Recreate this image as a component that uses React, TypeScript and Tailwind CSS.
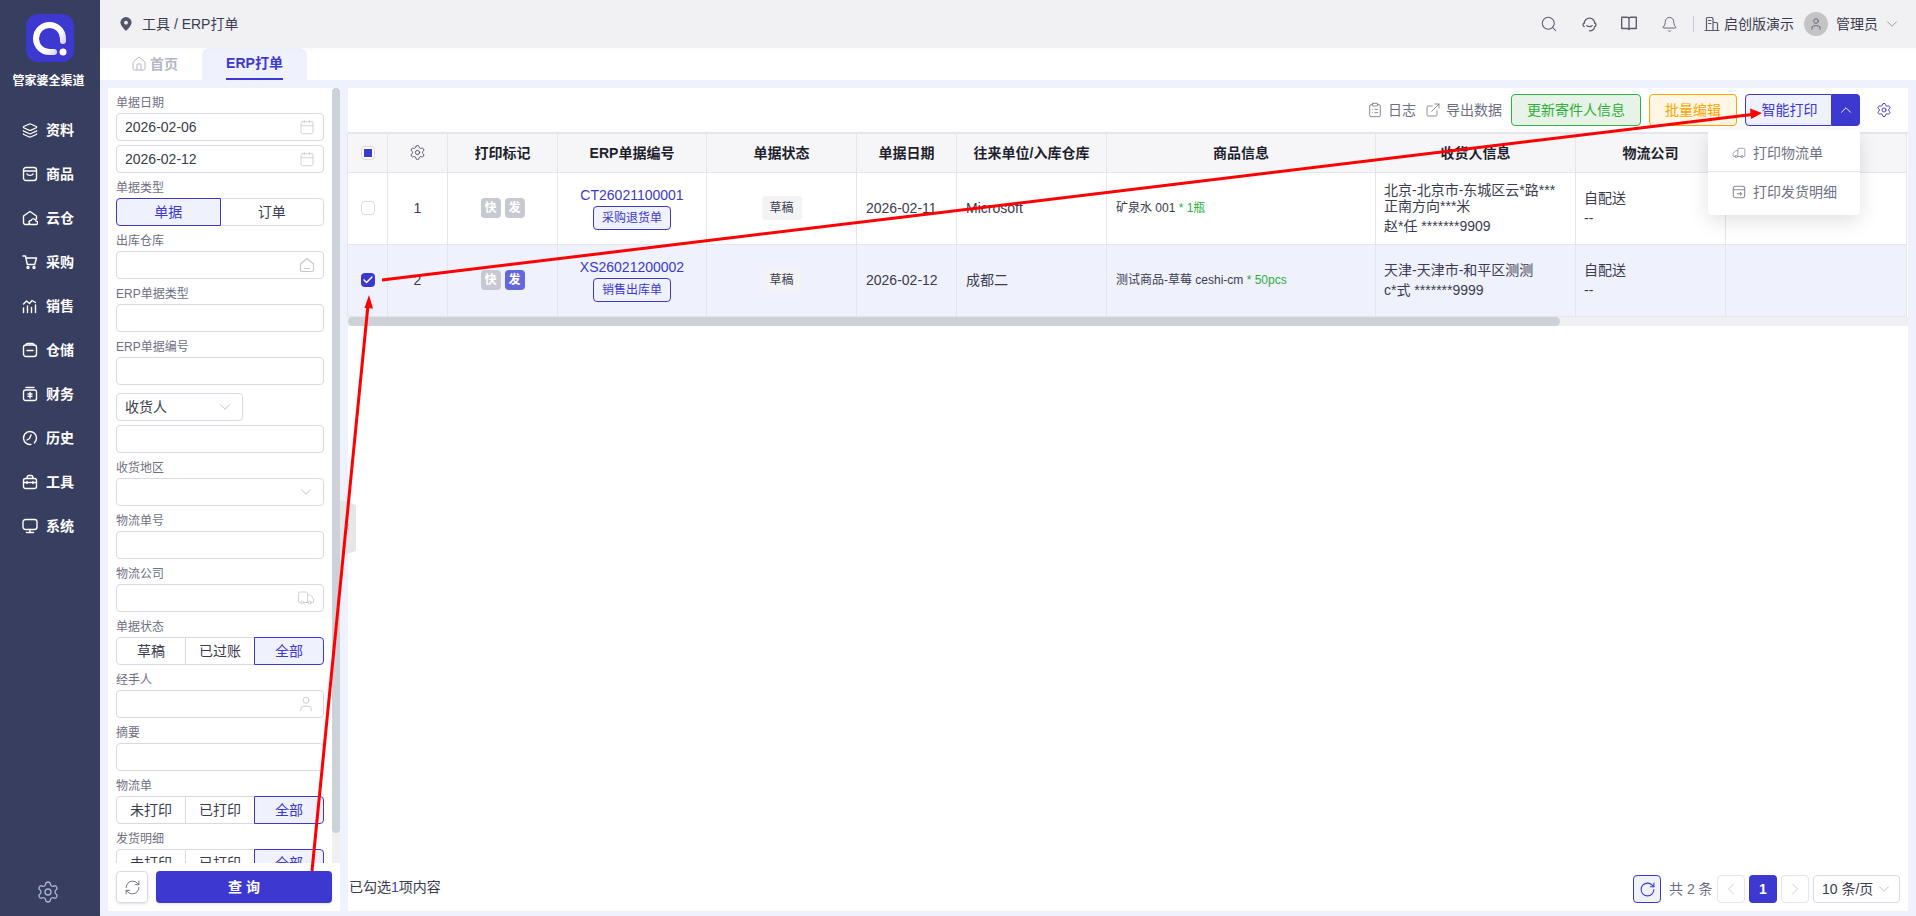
import React from 'react';
import { Layers, Search, Bell, ChevronDown, ChevronUp, ChevronLeft, ChevronRight, Calendar, Settings, User, Truck, ClipboardList, ExternalLink, RefreshCw, RotateCw, Check, House } from 'lucide-react';

const Ic = ({ children, className = 'w-4 h-4', sw = 1.2 }: { children: React.ReactNode; className?: string; sw?: number }) => (
  <svg viewBox="0 0 16 16" fill="none" stroke="currentColor" strokeWidth={sw} strokeLinecap="round" strokeLinejoin="round" className={className}>
    {children}
  </svg>
);

const menu = [
  { label: '资料', icon: <Layers className="w-[17px] h-[17px]" strokeWidth={1.8} /> },
  { label: '商品', icon: <Ic sw={1.4}><rect x="1.5" y="1.5" width="13" height="13" rx="2.5" /><path d="M1.5 5h13M5 8c.6 1.8 5.4 1.8 6 0" /></Ic> },
  { label: '云仓', icon: <Ic sw={1.4}><path d="M7 14.500H3.500a2 2 0 0 1-2-2V6L8 1.500 14.500 6v3" /><path d="M9 14.500a2 2 0 0 1 0-4 2.600 2.600 0 0 1 5 .6 1.700 1.700 0 0 1 0 3.400z" /></Ic> },
  { label: '采购', icon: <Ic sw={1.4}><path d="M1 2h2.500l1.800 8.500h7.400L14.500 4H4" /><circle cx="6" cy="13.500" r="1" /><circle cx="12" cy="13.500" r="1" /></Ic> },
  { label: '销售', icon: <Ic sw={1.4}><path d="M1.500 14.500V10M5.500 14.500V8M9.500 14.500V9.500M13.500 14.500V7M1.500 6l3-3 3 2.500 2.500-3 3.500 2" /></Ic> },
  { label: '仓储', icon: <Ic sw={1.4}><rect x="1.5" y="3" width="13" height="11.500" rx="2.500" /><path d="M4 3c0-1 .6-1.500 1.500-1.500h5c.9 0 1.500.5 1.500 1.500M5 8.500h6" /></Ic> },
  { label: '财务', icon: <Ic sw={1.4}><rect x="1.5" y="4" width="13" height="10.500" rx="2" /><path d="M4 1.500h8M8 6.500v5.500M6 8h4M6 10.200h4" /></Ic> },
  { label: '历史', icon: <Ic sw={1.4}><path d="M9 14.400A6.500 6.500 0 1 1 14.500 8a6.500 6.500 0 0 1-2.200 4.900" /><path d="M9 5 7.500 8.500 5 10" /></Ic> },
  { label: '工具', icon: <Ic sw={1.4}><rect x="1.5" y="4.500" width="13" height="10" rx="2" /><path d="M5 4.500c0-2 .8-3 1.800-3h2.400c1 0 1.800 1 1.800 3M1.500 8.500h13M5 7.500v2M11 7.500v2" /></Ic> },
  { label: '系统', icon: <Ic sw={1.4}><rect x="1" y="1.500" width="14" height="10" rx="2.500" /><path d="M4.500 14.500h7M8 11.500v3" /></Ic> },
];

const Label = ({ children }: { children: React.ReactNode }) => (
  <div className="h-[25px] pt-[5px] text-xs leading-5 text-[#6f6f83]">{children}</div>
);

const Box = ({ children, className = '' }: { children?: React.ReactNode; className?: string }) => (
  <div className={`h-7 w-full rounded border border-[#d9d9e3] bg-white flex items-center justify-between pl-2 pr-2 text-sm text-[#3c3c50] ${className}`}>
    {children}
  </div>
);

const Seg = ({ items, active }: { items: string[]; active: number }) => (
  <div className="flex h-7 w-full">
    {items.map((t, i) => (
      <div
        key={t}
        className={`flex-1 flex items-center justify-center text-sm border ${i > 0 ? '-ml-px' : ''} ${i === 0 ? 'rounded-l' : ''} ${i === items.length - 1 ? 'rounded-r' : ''} ${i === active ? 'relative z-10 border-[#3d38d0] bg-[#eff1fd] text-[#3d38d0]' : 'border-[#d9d9e3] bg-white text-[#3c3c50]'}`}
      >
        {t}
      </div>
    ))}
  </div>
);

const cal = <Calendar className="w-4 h-4 text-[#c8c8d2]" strokeWidth={1.2} />;
const chev = <ChevronDown className="w-[18px] h-[18px] shrink-0 text-[#b5b5c3]" strokeWidth={1.1} />;

function Filters() {
  return (
    <div className="w-[232px] bg-white flex flex-col shrink-0">
      <div className="h-[775px] flex overflow-hidden">
        <div className="flex-1 pl-2 pr-2 min-w-0">
          <Label>单据日期</Label>
          <Box>2026-02-06{cal}</Box>
          <Box className="mt-1">2026-02-12{cal}</Box>
          <Label>单据类型</Label>
          <Seg items={['单据', '订单']} active={0} />
          <Label>出库仓库</Label>
          <Box><span /><Ic className="w-4 h-4 text-[#c8c8d2]"><path d="M1.500 7 8 1.500 14.500 7v6a1.500 1.500 0 0 1-1.500 1.500H3A1.500 1.500 0 0 1 1.500 13zM5.500 11.500h5" /></Ic></Box>
          <Label>ERP单据类型</Label>
          <Box />
          <Label>ERP单据编号</Label>
          <Box />
          <div className="h-2" />
          <Box className="!w-[127px]"><span>收货人</span>{chev}</Box>
          <Box className="mt-1" />
          <Label>收货地区</Label>
          <Box><span />{chev}</Box>
          <Label>物流单号</Label>
          <Box />
          <Label>物流公司</Label>
          <Box><span /><Truck className="w-[18px] h-[18px] text-[#c8c8d2]" strokeWidth={1.1} /></Box>
          <Label>单据状态</Label>
          <Seg items={['草稿', '已过账', '全部']} active={2} />
          <Label>经手人</Label>
          <Box><span /><User className="w-[18px] h-[18px] text-[#c8c8d2]" strokeWidth={1.2} /></Box>
          <Label>摘要</Label>
          <Box />
          <Label>物流单</Label>
          <Seg items={['未打印', '已打印', '全部']} active={2} />
          <Label>发货明细</Label>
          <Seg items={['未打印', '已打印', '全部']} active={2} />
        </div>
        <div className="w-2 bg-[#f0f0f3] rounded-t shrink-0">
          <div className="h-[745px] bg-[#cdd2d9] rounded" />
        </div>
      </div>
      <div className="flex gap-2 px-2 pt-2 pb-2">
        <div className="w-8 h-8 rounded border border-[#d9d9e3] flex items-center justify-center text-[#5c5c70] shadow-sm">
          <RefreshCw className="w-[17px] h-[17px]" strokeWidth={1.2} />
        </div>
        <div className="flex-1 h-8 rounded bg-[#3d38d0] text-white text-sm font-bold flex items-center justify-center gap-1 shadow-sm">
          <span>查</span><span>询</span>
        </div>
      </div>
    </div>
  );
}

const Mark = ({ t, on }: { t: string; on?: boolean }) => (
  <span className={`w-5 h-5 rounded-sm text-white text-xs font-bold flex items-center justify-center ${on ? 'bg-[#6366dd]' : 'bg-[#c8c8d2]'}`}>{t}</span>
);

const Td = ({ children, className = '' }: { children?: React.ReactNode; className?: string }) => (
  <td className={`border-r border-b border-[#e5e5ec] align-middle p-0 ${className}`}>{children}</td>
);

const headers = ['打印标记', 'ERP单据编号', '单据状态', '单据日期', '往来单位/入库仓库', '商品信息', '收货人信息', '物流公司', ''];
const widths = ['w-[40px]', 'w-[60px]', 'w-[110px]', 'w-[149px]', 'w-[150px]', 'w-[100px]', 'w-[150px]', 'w-[269px]', 'w-[200px]', 'w-[150px]', 'w-[181px]'];

const rows = [
  { n: 1, checked: false, no: 'CT26021100001', kind: '采购退货单', date: '2026-02-11', co: 'Microsoft', goods: '矿泉水 001', qty: ' * 1瓶', addr: ['北京-北京市-东城区云*路***', '正南方向***米'], who: '赵*任 *******9909', on: false },
  { n: 2, checked: true, no: 'XS26021200002', kind: '销售出库单', date: '2026-02-12', co: '成都二', goods: '测试商品-草莓 ceshi-cm', qty: ' * 50pcs', addr: ['天津-天津市-和平区测测'], who: 'c*式 *******9999', on: true },
];

function OrderTable() {
  return (
    <div className="border-t-2 border-[#e5e5ec]">
      <table className="-ml-px table-fixed border-collapse w-[1559px] text-sm text-[#3c3c50]">
        <colgroup>
          {widths.map((w, i) => <col key={i} className={w} />)}
        </colgroup>
        <thead>
          <tr className="h-[38px] bg-[#f6f6f9]">
            <Td className="border-l">
              <div className="w-[14px] h-[14px] mx-auto rounded-sm border border-[#d9d9e3] bg-white flex items-center justify-center">
                <div className="w-2 h-2 bg-[#3d38d0]" />
              </div>
            </Td>
            <Td><Settings className="w-[17px] h-[17px] mx-auto text-[#3c3c50]" strokeWidth={1.2} /></Td>
            {headers.map((h, i) => <Td key={i} className="text-center font-bold text-[#1f1f2e]">{h}</Td>)}
          </tr>
        </thead>
        <tbody>
          {rows.map((r) => (
            <tr key={r.n} className={`h-[72px] ${r.checked ? 'bg-[#eff1fd]' : 'bg-white'}`}>
              <Td className="border-l">
                {r.checked ? (
                  <div className="w-[14px] h-[14px] mx-auto rounded-sm bg-[#3d38d0] flex items-center justify-center">
                    <Check className="w-3 h-3 text-white" strokeWidth={3} />
                  </div>
                ) : (
                  <div className="w-[14px] h-[14px] mx-auto rounded-sm border border-[#d9d9e3] bg-white" />
                )}
              </Td>
              <Td className="text-center">{r.n}</Td>
              <Td><div className="flex justify-center gap-1"><Mark t="快" /><Mark t="发" on={r.on} /></div></Td>
              <Td className="text-center">
                <div className="text-[#3d38d0] leading-[18px]">{r.no}</div>
                <div className="mt-[2px] mx-auto w-[78px] h-6 rounded-sm border border-[#3d38d0] bg-[#eff1fd] text-xs text-[#3d38d0] flex items-center justify-center">{r.kind}</div>
              </Td>
              <Td><div className="w-10 h-6 mx-auto rounded-sm bg-[#f3f3f5] text-xs flex items-center justify-center">草稿</div></Td>
              <Td className="pl-[9px]">{r.date}</Td>
              <Td className="pl-[9px]">{r.co}</Td>
              <Td className="pl-[9px] text-xs">{r.goods}<span className="text-[#2eae3c]">{r.qty}</span></Td>
              <Td className="pl-2">
                {r.addr.map((a) => <div key={a} className="leading-4">{a}</div>)}
                <div className="mt-1 leading-4">{r.who}</div>
              </Td>
              <Td className="pl-2">
                <div className="leading-5">自配送</div>
                <div className="leading-5">--</div>
              </Td>
              <Td />
            </tr>
          ))}
        </tbody>
      </table>
      <div className="h-[9px] bg-[#f0f0f3]">
        <div className="h-full w-[1212px] bg-[#cdd2d9] rounded-full" />
      </div>
    </div>
  );
}

function Toolbar() {
  return (
    <div className="h-11 flex items-center justify-end text-sm text-[#6f6f83] shrink-0 relative">
      <ClipboardList className="w-4 h-4 mr-[5px]" strokeWidth={1.2} />
      <span>日志</span>
      <ExternalLink className="w-4 h-4 ml-[9px] mr-[5px]" strokeWidth={1.2} />
      <span>导出数据</span>
      <div className="ml-[9px] w-[130px] h-8 rounded border border-[#2fb344] bg-[#e6f3e6] text-[#2eae3c] flex items-center justify-center">更新寄件人信息</div>
      <div className="ml-2 w-[88px] h-8 rounded border border-[#ffa500] bg-[#fff6e6] text-[#ffa500] flex items-center justify-center">批量编辑</div>
      <div className="ml-2 w-[87px] h-8 rounded-l border border-[#3d38d0] bg-[#eff1fd] text-[#3d38d0] flex items-center justify-center pl-[2px]">智能打印</div>
      <div className="w-7 h-8 rounded-r bg-[#3d38d0] text-white flex items-center justify-center">
        <ChevronUp className="w-[18px] h-[18px]" strokeWidth={1.2} />
      </div>
      <div className="w-12 flex justify-center"><Settings className="w-4 h-4 text-[#3d38d0]" strokeWidth={1.4} /></div>

      <div className="absolute left-[1360px] top-[42px] w-[152px] h-[85px] bg-white rounded shadow-[0_6px_20px_rgba(0,0,0,0.12)] z-20 text-[#6f6f83]">
        <div className="h-[42px] flex items-center pl-6 pt-1 border-b border-[#e5e5ec]">
          <Truck className="w-[14px] h-[14px] mr-[7px] text-[#8a8a9c] -scale-x-100" strokeWidth={1.3} />打印物流单
        </div>
        <div className="h-[43px] flex items-center pl-6 pb-[3px]">
          <Ic className="w-[14px] h-[14px] mr-[7px] text-[#8a8a9c]"><rect x="1.5" y="1.5" width="13" height="13" rx="2.5" /><path d="M1.500 5.500h13M6 10h5M9.500 8.500 11 10l-1.500 1.500" /></Ic>打印发货明细
        </div>
      </div>
    </div>
  );
}

function Pager() {
  const cell = 'w-7 h-7 rounded border border-[#e5e5ec] flex items-center justify-center text-[#c8c8d2]';
  return (
    <div className="h-10 flex items-start justify-between pl-px pr-2 text-sm text-[#3c3c50] shrink-0">
      <div className="h-8 flex items-center">已勾选<span className="text-[#3d38d0]">1</span>项内容</div>
      <div className="flex items-center gap-1 pt-1">
        <div className="w-7 h-7 rounded border border-[#3d38d0] bg-[#eff1fd] text-[#3d38d0] flex items-center justify-center mr-1">
          <RotateCw className="w-[17px] h-[17px]" strokeWidth={1.5} />
        </div>
        <span className="text-[#6f6f83] w-[44px] whitespace-nowrap">共 2 条</span>
        <div className={cell}><ChevronLeft className="w-5 h-5" strokeWidth={1.1} /></div>
        <div className="w-7 h-7 rounded bg-[#3d38d0] text-white font-bold flex items-center justify-center">1</div>
        <div className={cell}><ChevronRight className="w-5 h-5" strokeWidth={1.1} /></div>
        <div className="w-[87px] h-7 rounded border border-[#d9d9e3] flex items-center justify-between pl-2 pr-[6px] whitespace-nowrap">
          <span>10 条/页</span>{chev}
        </div>
      </div>
    </div>
  );
}

export default function App() {
  return (
    <div className="relative w-[1916px] h-[916px] overflow-hidden flex bg-[#eff1fd] [font-family:'Liberation_Sans','Noto_Sans_CJK_SC',sans-serif]">
      {/* Sidebar */}
      <aside className="w-[100px] shrink-0 bg-[#383e5f] text-white flex flex-col items-center">
        <div className="mt-[14px] w-12 h-12 rounded-xl bg-[#3d38d0] flex items-center justify-center">
          <svg viewBox="0 0 48 48" className="w-12 h-12" fill="none">
            <defs>
              <linearGradient id="logoRing" x1="8" y1="16" x2="38" y2="38" gradientUnits="userSpaceOnUse">
                <stop offset="0" stopColor="#ffffff" />
                <stop offset="0.6" stopColor="#ffffff" />
                <stop offset="1" stopColor="#bdbcf0" />
              </linearGradient>
            </defs>
            <path d="M28 38H23.500A13.500 13.500 0 1 1 37 24.500V27" stroke="url(#logoRing)" strokeWidth="6" strokeLinecap="round" />
            <circle cx="37" cy="38" r="3.500" fill="#fff" />
          </svg>
        </div>
        <div className="mt-[11px] -ml-[3px] text-xs font-bold leading-4 whitespace-nowrap">管家婆全渠道</div>
        <nav className="mt-[19px] w-full flex flex-col">
          {menu.map((m) => (
            <div key={m.label} className="h-11 flex items-center pl-[22px] gap-2 text-sm font-bold">
              <span className="w-4 flex justify-center shrink-0">{m.icon}</span>
              <span>{m.label}</span>
            </div>
          ))}
        </nav>
        <Settings className="mt-auto mb-3 -ml-1 w-6 h-6 text-[#aab2d8]" strokeWidth={1.3} />
      </aside>

      <div className="flex-1 min-w-0 flex flex-col">
        {/* Top bar */}
        <header className="h-12 shrink-0 bg-[#f1f1f4] flex items-center pl-5 pr-[15px] text-[#3c3c50] text-sm shadow-[0_3px_6px_rgba(0,0,0,0.02)] relative z-10">
          <svg viewBox="0 0 12 14" className="w-3 h-[14px] mr-[10px]" fill="#55556a">
            <path fillRule="evenodd" d="M6 0a5.600 5.600 0 0 1 5.600 5.600C11.600 9 6 14 6 14S.4 9 .4 5.600A5.600 5.600 0 0 1 6 0zm0 3.800a1.900 1.900 0 1 0 0 3.800 1.900 1.900 0 0 0 0-3.800z" />
          </svg>
          <span>工具 / ERP打单</span>
          <div className="ml-auto flex items-center text-[#5c5c70]">
            <div className="w-10 flex justify-center"><Search className="w-[18px] h-[18px]" strokeWidth={1.4} /></div>
            <div className="w-10 flex justify-center">
              <Ic className="w-[17px] h-[17px]"><path d="M3 7a5 5 0 0 1 10 0M13 6.500c1.300.3 1.500 3 0 3.500M3 6.500C1.500 7 1.500 9.500 3 10M13 10c-.5 2.500-2.500 4-5 4M5.500 9c1 1.200 4 1.200 5 0" /></Ic>
            </div>
            <div className="w-10 flex justify-center">
              <Ic className="w-[18px] h-[18px]"><path d="M1.500 2h5c.8 0 1.500.5 1.500 1.500V13c0-.6-.5-1-1-1H1.500zM14.500 2h-5C8.700 2 8 2.500 8 3.500V13c0-.6.5-1 1-1h5.500z" /></Ic>
            </div>
            <div className="w-10 flex justify-center"><Bell className="w-[17px] h-[17px]" strokeWidth={1.3} /></div>
            <div className="ml-1 w-px h-4 bg-[#c3c6e6] mr-[10px]" />
            <Ic className="w-4 h-4 mr-1"><path d="M1 14.500h14M2.500 14.500V2.500c0-.6.4-1 1-1h4.500c.6 0 1 .4 1 1v12M9 6.500h3.500c.6 0 1 .4 1 1v7M4.500 4.500h2.500M4.500 7.500h2.500" /></Ic>
            <span className="text-[#3c3c50]">启创版演示</span>
            <div className="ml-[10px] w-6 h-6 rounded-full bg-[#c4c4c8] flex items-center justify-center">
              <User className="w-[14px] h-[14px] text-[#55556a]" strokeWidth={1.4} />
            </div>
            <span className="ml-2 text-[#3c3c50]">管理员</span>
            <ChevronDown className="ml-[5px] w-[18px] h-[18px] text-[#8a8a9c]" strokeWidth={1.1} />
          </div>
        </header>

        {/* Tabs */}
        <div className="h-8 shrink-0 bg-white flex pl-[31px] text-sm font-bold">
          <div className="w-[71px] flex items-center text-[#b5b7c5] gap-[3px]">
            <House className="w-4 h-4" strokeWidth={1.5} />
            <span>首页</span>
          </div>
          <div className="w-[105px] bg-[#eff1fd] rounded-t-lg flex justify-center text-[#3d38d0]">
            <div className="h-full w-[57px] border-b-2 border-[#3d38d0] flex items-center justify-center whitespace-nowrap">ERP打单</div>
          </div>
        </div>

        {/* Content */}
        <div className="flex-1 min-h-0 flex gap-2 pl-2 pr-2 pt-2 pb-[5px]">
          <Filters />
          <main className="flex-1 min-w-0 bg-white flex flex-col relative">
            <Toolbar />
            <OrderTable />
            <div className="flex-1" />
            <Pager />
            {/* panel collapse handle */}
            <svg viewBox="0 0 16 56" className="absolute -left-2 top-[412px] w-4 h-14">
              <path d="M0 0 16 5V51L0 56z" fill="#e6e6e8" />
              <path d="M9 24 7 27l2 3" fill="none" stroke="#a8a8b0" strokeWidth="1" />
            </svg>
          </main>
        </div>
      </div>

      {/* Red annotation arrows */}
      <svg className="absolute inset-0 w-[1916px] h-[916px] z-30 pointer-events-none" viewBox="0 0 1916 916" fill="none">
        <path d="M312 871 368 305" stroke="#ff0000" strokeWidth="3" />
        <path d="M369 295 364.500 308 373 308.500z" fill="#ff0000" />
        <path d="M382 280 1752 114.500" stroke="#ff0000" strokeWidth="3" />
        <path d="M1762 113 1750 108.500 1751.200 119z" fill="#ff0000" />
      </svg>
    </div>
  );
}
